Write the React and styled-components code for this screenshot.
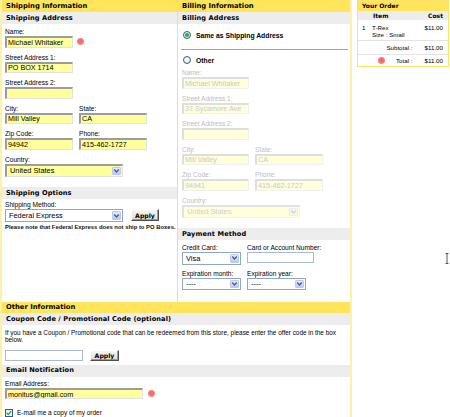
import React from 'react';
import styled, { createGlobalStyle } from 'styled-components';

const Global = createGlobalStyle`
  html, body { margin: 0; padding: 0; background: #fff; }
  body { font-family: "Liberation Sans", Arial, sans-serif; color: #000; }
  * { box-sizing: border-box; }
`;

const YELLOW = '#ffe45c';
const GRAY = '#ededed';
const HEAD_FONT = '"DejaVu Sans", Verdana, sans-serif';

const Page = styled.div`
  position: relative;
  display: flex;
  align-items: flex-start;
  gap: 5px;
  width: 450px;
  height: 417px;
  overflow: hidden;
`;

const MainBox = styled.div`
  flex: none;
  width: 352px;
  min-height: 417px;
  border-left: 2px solid #fff2a6;
  border-right: 2px solid #fff2a6;
`;

const TopGrid = styled.div`
  display: grid;
  grid-template-columns: 175px 1fr;
`;

const Column = styled.section`
  border-left: ${p => (p.$divider ? '1px solid #dcdcdc' : '0')};
  padding-bottom: ${p => p.$pb || 0}px;
`;

const Header = styled.div`
  background: ${YELLOW};
  height: ${p => p.$h || 12}px;
  line-height: ${p => p.$h || 12}px;
  padding-left: 4px;
  font-family: ${HEAD_FONT};
  font-weight: bold;
  font-size: 6.8px;
  white-space: nowrap;
`;

const SubHeader = styled.div`
  background: ${GRAY};
  height: ${p => p.$h || 12}px;
  line-height: ${p => p.$h || 12}px;
  margin-top: ${p => p.$mt || 0}px;
  padding-left: 4px;
  font-family: ${HEAD_FONT};
  font-weight: bold;
  font-size: 6.6px;
  letter-spacing: 0.1px;
  white-space: nowrap;
`;

const Body = styled.div`
  padding: ${p => p.$pt || 0}px ${p => (p.$px ?? 3)}px 0;
`;

const Row = styled.div`
  display: flex;
  align-items: ${p => p.$align || 'flex-start'};
  gap: ${p => (p.$gap ?? 6)}px;
  margin-top: ${p => p.$mt || 0}px;
  margin-bottom: ${p => (p.$mb ?? 6)}px;
`;

const Field = styled.div`
  display: flex;
  flex-direction: column;
`;

const Label = styled.label`
  display: block;
  height: 8px;
  line-height: 8px;
  font-size: 6.6px;
  color: ${p => (p.$disabled ? '#bdbdbd' : '#000')};
  white-space: nowrap;
`;

const InputLine = styled.div`
  display: flex;
  align-items: center;
`;

const inputSkins = {
  yellow: `
    background: #ffff9c;
    color: #000;
    border-width: 2px 1px 1px 2px;
    border-color: #9c9c9c #e2e2e2 #e2e2e2 #9c9c9c;
  `,
  disabled: `
    background: #ffffdc;
    color: #c9c9c9;
    border-width: 2px 1px 1px 2px;
    border-color: #dedede #f0f0f0 #f0f0f0 #dedede;
  `,
  white: `
    background: #fff;
    color: #000;
    border-width: 1px;
    border-color: #a9bbd3;
  `,
};

const TextInput = styled.input`
  display: block;
  width: ${p => p.$w}px;
  height: ${p => p.$h || 11.5}px;
  margin: 0;
  padding: 0 0 0 1px;
  font-family: "Liberation Sans", Arial, sans-serif;
  font-size: 7.2px;
  border-style: solid;
  border-radius: 0;
  outline: none;
  ${p => inputSkins[p.$skin || 'yellow']}
`;

const selectSkins = {
  yellow: `
    background: #ffff9c;
    color: #000;
    border-width: 2px 1px 1px 2px;
    border-color: #9c9c9c #e2e2e2 #e2e2e2 #9c9c9c;
  `,
  white: `
    background: #fff;
    color: #000;
    border-width: 1px;
    border-color: #8fa8c8;
  `,
  disabled: `
    background: #ffffdc;
    color: #cfcfcf;
    border-width: 2px 1px 1px 2px;
    border-color: #e2e2e2 #f0f0f0 #f0f0f0 #e2e2e2;
  `,
};

const SelectBox = styled.div`
  display: flex;
  align-items: center;
  width: ${p => p.$w}px;
  height: ${p => p.$h || 13}px;
  padding-left: 3px;
  border-style: solid;
  font-size: 7.4px;
  ${p => selectSkins[p.$skin || 'white']}
`;

const SelectText = styled.span`
  flex: 1;
  overflow: hidden;
  white-space: nowrap;
  line-height: 1;
`;

const ArrowBtn = styled.span`
  flex: none;
  display: flex;
  align-items: center;
  justify-content: center;
  width: 9px;
  height: calc(100% - 2px);
  margin-right: 1px;
  border: 1px solid ${p => (p.$disabled ? '#ececec' : '#bccbec')};
  border-radius: 1px;
  background: ${p =>
    p.$disabled ? '#f7f7f2' : 'linear-gradient(#e2eafc, #b9cbf2)'};
`;

const Select = ({ w, h, skin, children }) => (
  <SelectBox $w={w} $h={h} $skin={skin}>
    <SelectText>{children}</SelectText>
    <ArrowBtn $disabled={skin === 'disabled'}>
      <svg width="7" height="6" viewBox="0 0 7 6">
        <path
          d="M1.2 1.6 L3.5 4 L5.8 1.6"
          fill="none"
          stroke={skin === 'disabled' ? '#d4d4d4' : '#4a5f8c'}
          strokeWidth="1.4"
        />
      </svg>
    </ArrowBtn>
  </SelectBox>
);

const Button = styled.button`
  flex: none;
  width: ${p => p.$w || 28}px;
  height: ${p => p.$h || 12}px;
  margin: 0;
  padding: 0;
  font-family: ${HEAD_FONT};
  font-weight: bold;
  font-size: 6.2px;
  color: #000;
  background: linear-gradient(#f7f7f4, #dddbd2);
  border: 1px solid;
  border-color: #ffffff #4f4f4f #4f4f4f #ffffff;
  box-shadow: inset -1px -1px 0 #9b9b9b;
`;

const RequiredDot = styled.span`
  flex: none;
  width: 7px;
  height: 7px;
  margin-left: ${p => p.$ml || 0}px;
  margin-right: ${p => p.$mr || 0}px;
  border-radius: 50%;
  background: radial-gradient(circle at 50% 45%, #ff5c5c 0%, #f47c7c 55%, #f9b2b2 100%);
`;

const Note = styled.p`
  margin: 1px 0 0;
  line-height: 8px;
  font-size: 5.9px;
  font-weight: bold;
  white-space: nowrap;
  color: #111;
`;

const RadioRow = styled.label`
  display: flex;
  align-items: center;
  gap: 5px;
  height: 10px;
  margin-top: ${p => p.$mt || 0}px;
  padding-left: 5px;
  font-weight: bold;
  font-size: 6.8px;
  white-space: nowrap;
`;

const RadioCircle = styled.span`
  flex: none;
  display: flex;
  align-items: center;
  justify-content: center;
  width: 8px;
  height: 8px;
  border-radius: 50%;
  border: 1px solid #2f5f92;
  background: radial-gradient(circle at 40% 35%, #ffffff, #dcdcd4);
  &::after {
    content: '';
    display: ${p => (p.$checked ? 'block' : 'none')};
    width: 3.5px;
    height: 3.5px;
    border-radius: 50%;
    background: #35b038;
  }
`;

const Rule = styled.div`
  height: 1px;
  margin: 8.5px 2px 0 3px;
  background: #a3a3a3;
`;

const Paragraph = styled.p`
  margin: ${p => p.$mt || 0}px 0 0;
  font-size: 6.4px;
  line-height: 7.5px;
  max-width: 342px;
`;

const CheckRow = styled.label`
  display: flex;
  align-items: center;
  gap: 4px;
  height: 9px;
  margin-top: ${p => p.$mt || 0}px;
  font-size: 6.5px;
  white-space: nowrap;
`;

const CheckBox = styled.span`
  flex: none;
  display: flex;
  align-items: center;
  justify-content: center;
  width: 8px;
  height: 8px;
  border: 1px solid #2f5f92;
  background: linear-gradient(135deg, #e8e8e0, #ffffff);
`;

const OrderBox = styled.aside`
  flex: none;
  width: 92px;
  border: 1px solid #ffe36a;
  background: #fff;
  font-size: 6.2px;
`;

const OrderHeader = styled.div`
  height: 10px;
  line-height: 10px;
  padding-left: 4px;
  background: ${YELLOW};
  font-family: ${HEAD_FONT};
  font-weight: bold;
  font-size: 6px;
  white-space: nowrap;
`;

const OrderCols = styled.div`
  display: flex;
  justify-content: space-between;
  align-items: center;
  height: 9px;
  padding: 0 5px 0 15px;
  background: ${GRAY};
  font-family: ${HEAD_FONT};
  font-weight: bold;
  font-size: 6px;
`;

const ItemRow = styled.div`
  display: grid;
  grid-template-columns: 10px 1fr auto;
  height: 20px;
  padding: 3.5px 5px 0 4px;
  line-height: 7px;
`;

const ItemLines = styled.div`
  display: flex;
  flex-direction: column;
  white-space: nowrap;
`;

const OrderRule = styled.div`
  height: 1px;
  background: #e3e3e3;
`;

const SumRow = styled.div`
  display: flex;
  justify-content: flex-end;
  align-items: center;
  gap: 12px;
  height: ${p => p.$h}px;
  padding-right: 5px;
  white-space: nowrap;
`;

const SumLabel = styled.span`
  display: flex;
  align-items: center;
`;

const Cursor = styled.svg`
  position: absolute;
  left: 445px;
  top: 253px;
`;

const ShipField = ({ label, value, w = 68, dot, skin = 'yellow', h }) => (
  <Field>
    <Label $disabled={skin === 'disabled'}>{label}</Label>
    <InputLine>
      <TextInput $w={w} $h={h} $skin={skin} value={value} readOnly />
      {dot && <RequiredDot $ml={4} />}
    </InputLine>
  </Field>
);

const AddressFields = ({ skin, name, street1, zip }) => {
  const w = skin === 'yellow' ? 68 : 67;
  return (
    <>
      <Row>
        <ShipField label="Name:" value={name} skin={skin} dot={skin === 'yellow'} w={w} />
      </Row>
      <Row>
        <ShipField label="Street Address 1:" value={street1} skin={skin} w={w} />
      </Row>
      <Row>
        <ShipField label="Street Address 2:" value="" skin={skin} w={w} />
      </Row>
      <Row>
        <ShipField label="City:" value="Mill Valley" skin={skin} w={w} />
        <ShipField label="State:" value="CA" skin={skin} />
      </Row>
      <Row>
        <ShipField label="Zip Code:" value={zip} skin={skin} w={w} />
        <ShipField label="Phone:" value="415-462-1727" skin={skin} />
      </Row>
      <Row $mb={0}>
        <Field>
          <Label $disabled={skin === 'disabled'}>Country:</Label>
          <Select w={118} h={13} skin={skin}>United States</Select>
        </Field>
      </Row>
    </>
  );
};

export default function App() {
  return (
    <>
      <Global />
      <Page>
        <MainBox>
          <TopGrid>
            <Column>
              <Header>Shipping Information</Header>
              <SubHeader>Shipping Address</SubHeader>
              <Body $pt={4}>
                <AddressFields skin="yellow" name="Michael Whitaker" street1="PO BOX 1714" zip="94942" />
              </Body>
              <SubHeader $mt={10.5}>Shipping Options</SubHeader>
              <Body $pt={2}>
                <Label>Shipping Method:</Label>
                <Row $mb={0} $gap={8}>
                  <Select w={118} h={13} skin="white">Federal Express</Select>
                  <Button $w={28} $h={12}>Apply</Button>
                </Row>
                <Note>Please note that Federal Express does not ship to PO Boxes.</Note>
              </Body>
            </Column>

            <Column $divider $pb={12}>
              <Header>Billing Information</Header>
              <SubHeader>Billing Address</SubHeader>
              <RadioRow $mt={6}>
                <RadioCircle $checked />
                Same as Shipping Address
              </RadioRow>
              <Rule />
              <RadioRow $mt={5.5}>
                <RadioCircle />
                Other
              </RadioRow>
              <Body $pt={4} $px={4}>
                <AddressFields skin="disabled" name="Michael Whitaker" street1="37 Sycamore Ave" zip="94941" />
              </Body>
              <SubHeader $mt={10.5}>Payment Method</SubHeader>
              <Body $pt={4} $px={4}>
                <Row $mb={5}>
                  <Field>
                    <Label>Credit Card:</Label>
                    <Select w={59} h={12.5} skin="white">Visa</Select>
                  </Field>
                  <Field>
                    <Label>Card or Account Number:</Label>
                    <TextInput $w={67} $h={11} $skin="white" value="" readOnly />
                  </Field>
                </Row>
                <Row $mb={0}>
                  <Field>
                    <Label>Expiration month:</Label>
                    <Select w={59} h={12} skin="white">----</Select>
                  </Field>
                  <Field>
                    <Label>Expiration year:</Label>
                    <Select w={59} h={12} skin="white">----</Select>
                  </Field>
                </Row>
              </Body>
            </Column>
          </TopGrid>

          <Header $h={11}>Other Information</Header>
          <SubHeader>Coupon Code / Promotional Code (optional)</SubHeader>
          <Body>
            <Paragraph $mt={4}>
              If you have a Coupon / Promotional code that can be redeemed from this store, please enter the offer code in the box below.
            </Paragraph>
            <Row $mb={0} $gap={7} $mt={6} $align="center">
              <TextInput $w={78} $h={11} $skin="white" value="" readOnly />
              <Button $w={29} $h={11.5}>Apply</Button>
            </Row>
          </Body>
          <SubHeader $mt={4} $h={11.5}>Email Notification</SubHeader>
          <Body $pt={3.5}>
            <Field>
              <Label>Email Address:</Label>
              <InputLine>
                <TextInput $w={138} $h={11} value="monitus@gmail.com" readOnly />
                <RequiredDot $ml={5} />
              </InputLine>
            </Field>
            <CheckRow $mt={9}>
              <CheckBox>
                <svg width="6" height="6" viewBox="0 0 6 6">
                  <path d="M0.8 3 L2.4 4.6 L5.2 1.2" fill="none" stroke="#22a12a" strokeWidth="1.3" />
                </svg>
              </CheckBox>
              E-mail me a copy of my order
            </CheckRow>
          </Body>
        </MainBox>

        <OrderBox>
          <OrderHeader>Your Order</OrderHeader>
          <OrderCols>
            <span>Item</span>
            <span>Cost</span>
          </OrderCols>
          <ItemRow>
            <span>1</span>
            <ItemLines>
              <span>T-Rex</span>
              <span>Size : Small</span>
            </ItemLines>
            <span>$11.00</span>
          </ItemRow>
          <OrderRule />
          <SumRow $h={13}>
            <SumLabel>Subtotal :</SumLabel>
            <span>$11.00</span>
          </SumRow>
          <OrderRule />
          <SumRow $h={11}>
            <SumLabel>
              <RequiredDot $mr={11} />
              Total :
            </SumLabel>
            <span>$11.00</span>
          </SumRow>
        </OrderBox>

        <Cursor width="5" height="11" viewBox="0 0 5 11">
          <path d="M0.5 0.5 H2 V10.5 H0.5 M2 0.5 H3.5 M2 10.5 H3.5" fill="none" stroke="#555" strokeWidth="1" />
        </Cursor>
      </Page>
    </>
  );
}
